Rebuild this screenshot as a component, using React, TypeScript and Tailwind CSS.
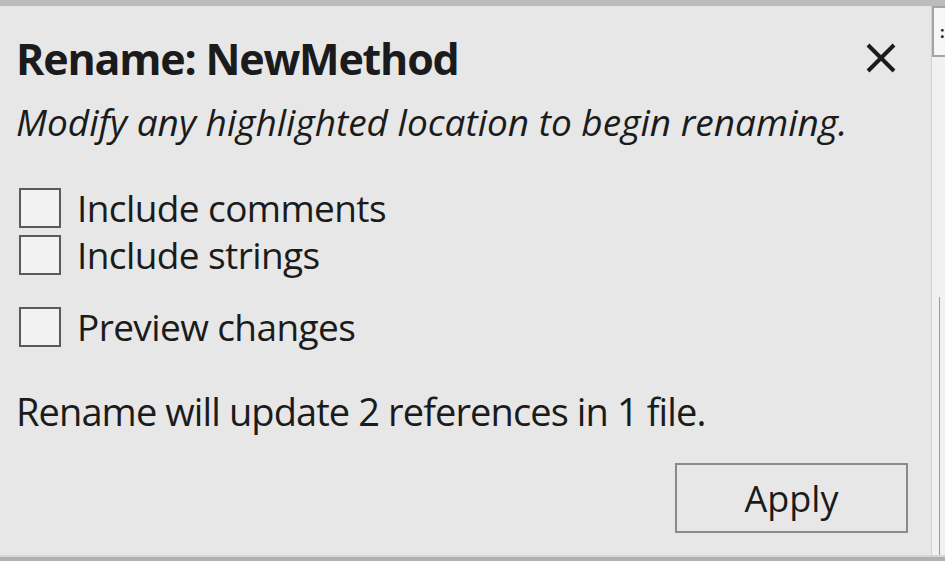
const options = [
  { label: "Include comments", gap: "mt-0" },
  { label: "Include strings", gap: "mt-[7px]" },
  { label: "Preview changes", gap: "mt-[32px]" },
]

function Checkbox({ label, gap }: { label: string; gap: string }) {
  return (
    <label className={`flex h-[40px] items-center ${gap}`}>
      <span className="ml-[3px] h-[40px] w-[42px] shrink-0 border-2 border-[#5a5a5a] bg-[#f2f2f2]" />
      <span className="ml-[16px] text-[37px] leading-[40px] tracking-[-0.6px] text-[#1b1b1b]">
        {label}
      </span>
    </label>
  )
}

export default function App() {
  return (
    <div
      className="flex h-[561px] w-[945px] flex-col bg-[#e7e7e7]"
      style={{ fontFamily: '"Open Sans", "Noto Sans", sans-serif' }}
    >
      <div className="h-[6px] bg-[#bcbcbc]" />
      <div className="flex min-h-0 flex-1">
        <div className="flex flex-1 flex-col pl-[16px] pr-[23px]">
          <div className="mt-[30px] flex items-center justify-between pr-[11px]">
            <h1 className="text-[43px] font-bold leading-[46px] tracking-[-1.2px] text-[#1b1b1b]">
              Rename: NewMethod
            </h1>
            <svg width="32" height="30" viewBox="0 0 32 30" className="mt-[-3px] text-[#1b1b1b]">
              <path d="M3 2 L29 28 M29 2 L3 28" stroke="currentColor" strokeWidth="4" />
            </svg>
          </div>
          <p className="mt-[22px] text-[37px] italic leading-[36px] text-[#1b1b1b]">
            Modify any highlighted location to begin renaming.
          </p>
          <div className="mt-[48px] flex flex-col">
            {options.map((o) => (
              <Checkbox key={o.label} label={o.label} gap={o.gap} />
            ))}
          </div>
          <p className="mt-[44px] text-[38px] leading-[40px] tracking-[-0.9px] text-[#1b1b1b]">
            Rename will update 2 references in 1 file.
          </p>
          <div className="mt-[32px] flex justify-end">
            <button className="h-[70px] w-[233px] border-2 border-[#8a8a8a] bg-[#e7e7e7] pt-[2px] text-[36px] text-[#1b1b1b]">
              Apply
            </button>
          </div>
        </div>
        <div className="flex w-[14px] flex-col border-l border-[#cfcfcf] bg-[#f1f1f1]">
          <div className="flex h-[51px] items-center overflow-hidden border-2 border-r-0 border-[#a4a4a4] bg-[#f6f6f6] pl-[6px] text-[16px] font-bold leading-none text-[#222]">
            :
          </div>
          <div className="mt-[240px] ml-[7px] flex-1 border-l border-[#9a9a9a]" />
        </div>
      </div>
      <div className="h-[2px] bg-[#d6d6d6]" />
      <div className="h-[4px] bg-[#b0b0b0]" />
    </div>
  )
}
